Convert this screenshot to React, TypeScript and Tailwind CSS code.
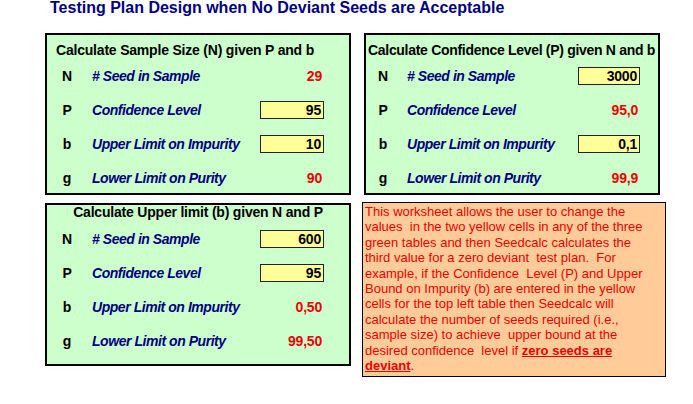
import React from 'react';

type Row = { sym: string; label: string; value: string; input?: boolean };

const sampleSize: Row[] = [
  { sym: 'N', label: '# Seed in Sample', value: '29' },
  { sym: 'P', label: 'Confidence Level', value: '95', input: true },
  { sym: 'b', label: 'Upper Limit on Impurity', value: '10', input: true },
  { sym: 'g', label: 'Lower Limit on Purity', value: '90' },
];

const confidence: Row[] = [
  { sym: 'N', label: '# Seed in Sample', value: '3000', input: true },
  { sym: 'P', label: 'Confidence Level', value: '95,0' },
  { sym: 'b', label: 'Upper Limit on Impurity', value: '0,1', input: true },
  { sym: 'g', label: 'Lower Limit on Purity', value: '99,9' },
];

const upperLimit: Row[] = [
  { sym: 'N', label: '# Seed in Sample', value: '600', input: true },
  { sym: 'P', label: 'Confidence Level', value: '95', input: true },
  { sym: 'b', label: 'Upper Limit on Impurity', value: '0,50' },
  { sym: 'g', label: 'Lower Limit on Purity', value: '99,50' },
];

function Rows({ rows, wide }: { rows: Row[]; wide?: boolean }) {
  return (
    <div className="flex flex-col">
      {rows.map((r) => (
        <div key={r.sym} className="flex items-center h-[34px]">
          <div className={wide ? 'w-[20px] ml-[10px] text-center font-bold text-[14px] text-black' : 'w-[20px] ml-[7px] text-center font-bold text-[14px] text-black'}>
            {r.sym}
          </div>
          <div className={wide ? 'ml-[15px] flex-1 font-bold italic text-[14px] tracking-[-0.45px] text-[#000080]' : 'ml-[14px] flex-1 font-bold italic text-[14px] tracking-[-0.45px] text-[#000080]'}>
            {r.label}
          </div>
          <div
            className={
              (wide ? 'w-[64px] mr-[25px] ' : 'w-[62px] mr-[18px] ') +
              (r.input
                ? 'h-[18px] leading-[16px] border border-[#222] bg-[#ffff99] text-black'
                : 'h-[18px] leading-[18px] text-[#ee0000]') +
              ' text-right pr-[2px] font-bold text-[14px]'
            }
          >
            {r.value}
          </div>
        </div>
      ))}
    </div>
  );
}

export default function App() {
  return (
    <div className="w-[693px] h-[404px] bg-white overflow-hidden font-['Liberation_Sans',Arial,sans-serif] tracking-[-0.2px]">
      <h1 className="pl-[50px] -mt-[1px] h-[18px] leading-[18px] text-[16px] font-bold text-[#000080] tracking-normal">
        Testing Plan Design when No Deviant Seeds are Acceptable
      </h1>

      <div className="flex items-start mt-[16px] ml-[45px]">
        <div className="w-[306px] h-[162px] border-2 border-black bg-[#ccffcc]">
          <div className="pt-[6px] h-[24px] leading-[18px] pl-[9px] font-bold text-[14px] text-black">
            Calculate Sample Size (N) given P and b
          </div>
          <Rows rows={sampleSize} wide />
        </div>

        <div className="ml-[13px] w-[296px] h-[162px] border-2 border-black bg-[#ccffcc]">
          <div className="pt-[6px] h-[24px] leading-[18px] pl-[2px] font-bold text-[14px] tracking-[-0.3px] text-black whitespace-nowrap">
            Calculate Confidence Level (P) given N and b
          </div>
          <Rows rows={confidence} />
        </div>
      </div>

      <div className="flex items-start mt-[7px] ml-[45px]">
        <div className="mt-[1px] w-[306px] h-[163px] border-2 border-black bg-[#ccffcc]">
          <div className="h-[14px] leading-[14px] mb-[3px] text-center font-bold text-[14px] text-black">
            Calculate Upper limit (b) given N and P
          </div>
          <Rows rows={upperLimit} wide />
        </div>

        <div className="ml-[11px] w-[304px] h-[175px] border border-black bg-[#ffcc99] pl-[2px] pt-[1px] text-[13px] leading-[15.4px] text-[#ee0000] whitespace-nowrap tracking-normal">
          <div>This worksheet allows the user to change the</div>
          <div>values&nbsp; in the two yellow cells in any of the three</div>
          <div>green tables and then Seedcalc calculates the</div>
          <div>third value for a zero deviant&nbsp; test plan.&nbsp; For</div>
          <div>example, if the Confidence&nbsp; Level (P) and Upper</div>
          <div>Bound on Impurity (b) are entered in the yellow</div>
          <div>cells for the top left table then Seedcalc will</div>
          <div>calculate the number of seeds required (i.e.,</div>
          <div>sample size) to achieve&nbsp; upper bound at the</div>
          <div>
            desired confidence&nbsp; level if <b className="underline">zero seeds are</b>
          </div>
          <div>
            <b className="underline">deviant</b>.
          </div>
        </div>
      </div>
    </div>
  );
}
